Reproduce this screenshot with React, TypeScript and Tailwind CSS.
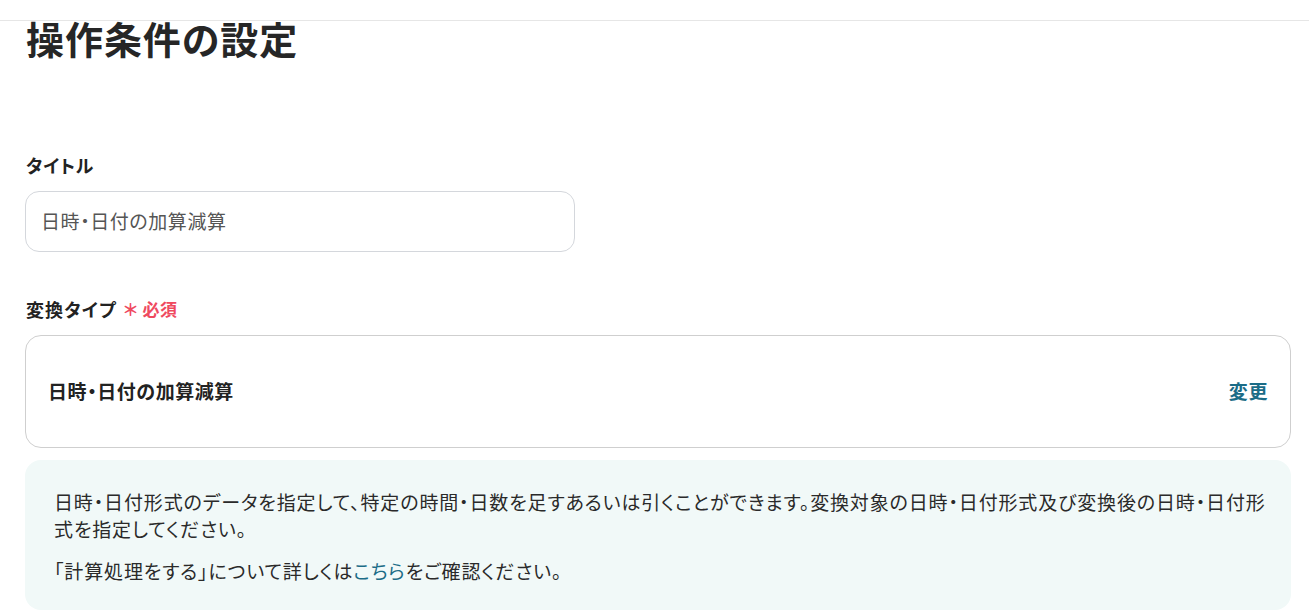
import React from "react";

const font = { fontFamily: '"Noto Sans CJK JP", "Noto Sans", sans-serif' };

const App: React.FC = () => {
    return (
        <div className="min-h-screen bg-white text-[#222] [font-feature-settings:'palt']" style={font}>
            <div className="h-[21px] border-b border-[#e6e6e6]"></div>
            <div className="pl-[25px] pr-[18px]">
                <h1 className="text-[38px] font-bold leading-[32px] tracking-[0.025em] pl-[1px] pt-[1px] text-[#262626]">操作条件の設定</h1>

                <div className="mt-[99px]">
                    <label className="block text-[18px] font-bold leading-[24px] tracking-[0.04em] pl-[1px]">タイトル</label>
                    <div className="mt-[14px] w-[550px] h-[61px] flex items-center px-[15px] border border-[#d4d7dc] rounded-[14px] text-[19px] text-[#555] tracking-[0.03em]">
                        日時・日付の加算減算
                    </div>
                </div>

                <div className="mt-[45px]">
                    <div className="flex items-center gap-[7px] pl-[1px]">
                        <span className="text-[18px] font-bold leading-[24px] tracking-[0.06em]">変換タイプ</span>
                        <span className="text-[17px] font-bold text-[#ef4a5f] leading-[24px] tracking-[0.03em]">＊ 必須</span>
                    </div>
                    <div className="mt-[14px] h-[113px] flex items-center justify-between pl-[22px] pr-[22px] border border-[#cfcfcf] rounded-[16px]">
                        <span className="text-[19px] font-bold tracking-[0.03em]">日時・日付の加算減算</span>
                        <button className="text-[19px] font-bold text-[#1b6c87] tracking-[0.03em]">変更</button>
                    </div>
                </div>

                <div className="mt-[12px] bg-[#f1f9f8] rounded-[16px] pl-[29px] pr-[22px] pt-[28px] pb-[26px] text-[19px] leading-[27px] tracking-[0.045em] text-[#2a2a2a]">
                    <p>日時・日付形式のデータを指定して、特定の時間・日数を足すあるいは引くことができます。変換対象の日時・日付形式及び変換後の日時・日付形式を指定してください。</p>
                    <p className="mt-[15px]">「計算処理をする」について詳しくは<a className="text-[#1b6c87]" href="#">こちら</a>をご確認ください。</p>
                </div>
            </div>
        </div>
    );
};

export default App;
